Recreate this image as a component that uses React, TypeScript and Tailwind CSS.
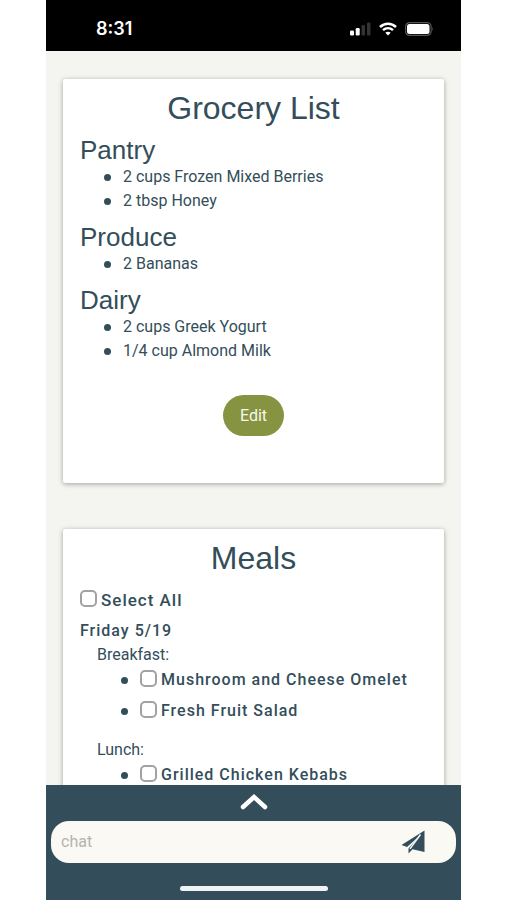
import React, { useState } from "react";

const groceries = [
  { name: "Pantry", items: ["2 cups Frozen Mixed Berries", "2 tbsp Honey"] },
  { name: "Produce", items: ["2 Bananas"] },
  { name: "Dairy", items: ["2 cups Greek Yogurt", "1/4 cup Almond Milk"] },
];

const meals = [
  { name: "Breakfast:", items: ["Mushroom and Cheese Omelet", "Fresh Fruit Salad"] },
  { name: "Lunch:", items: ["Grilled Chicken Kebabs"] },
];

const everyMeal = meals.flatMap((meal) => meal.items);

function StatusBar() {
  return (
    <header className="flex h-[51px] shrink-0 items-center justify-between bg-black pt-[6px] pr-[27px] pl-[50px] text-white">
      <span className="font-['Inter',sans-serif] text-[18px] leading-6 font-semibold">8:31</span>
      <div className="flex items-center gap-2">
        <svg width="21" height="14" viewBox="0 0 21 14" aria-label="Signal">
          <rect x="0" y="8.500" width="4" height="5" rx="1.200" fill="#fff" />
          <rect x="5.700" y="6" width="4" height="7.500" rx="1.200" fill="#fff" />
          <rect x="11.500" y="3" width="3.500" height="10.500" rx="1.200" fill="#333" />
          <rect x="17" y="0.500" width="3.500" height="13" rx="1.200" fill="#333" />
        </svg>
        <svg width="18" height="14" viewBox="0 0 18 14" fill="none" stroke="#fff" aria-label="Wi-Fi">
          <path d="M1 5C5.600 0.600 12.400 0.600 17 5" strokeWidth="2.500" />
          <path d="M4 8.200C6.900 5.500 11.100 5.500 14 8.200" strokeWidth="2.400" />
          <path d="M9 13.500L6.300 10.800C7.800 9.400 10.200 9.400 11.700 10.800Z" fill="#fff" stroke="none" />
        </svg>
        <svg width="29" height="14" viewBox="0 0 29 14" aria-label="Battery">
          <rect x="0.600" y="0.600" width="25.500" height="12.800" rx="4" fill="none" stroke="#555" strokeWidth="1.200" />
          <rect x="2" y="2" width="22.500" height="10" rx="2.500" fill="#fff" />
          <path d="M27.300 5Q28.800 7 27.300 9Z" fill="#666" />
        </svg>
      </div>
    </header>
  );
}

function Card({ title, children }: { title: string; children: React.ReactNode }) {
  return (
    <section className="rounded-[2px] bg-white px-[17px] pt-[9px] pb-[47px] shadow-[0_1px_5px_rgba(0,0,0,0.35)]">
      <h1 className="text-center font-['Liberation_Sans',sans-serif] text-[32px] leading-10">{title}</h1>
      {children}
    </section>
  );
}

function Bullet() {
  return <span className="mr-[12px] size-[7px] shrink-0 rounded-full bg-[#334e5a]" />;
}

function Check({ label, checked, onChange }: { label: string; checked: boolean; onChange: () => void }) {
  return (
    <label className="flex items-center gap-1 font-medium tracking-[1px]">
      <input
        type="checkbox"
        checked={checked}
        onChange={onChange}
        className="mb-1 size-[17px] appearance-none rounded-[5px] border-2 border-[#a3a1a1] bg-white checked:bg-[#334e5a]"
      />
      {label}
    </label>
  );
}

export default function App() {
  const [picked, setPicked] = useState<string[]>([]);
  const allPicked = picked.length === everyMeal.length;
  const toggle = (name: string) =>
    setPicked(picked.includes(name) ? picked.filter((item) => item !== name) : [...picked, name]);

  return (
    <div className="h-screen bg-white px-[46px] font-['Roboto',sans-serif] text-[16px] leading-6 text-[#334e5a]">
      <div className="flex h-full flex-col">
        <StatusBar />
        <main className="flex min-h-0 flex-1 flex-col gap-[46px] overflow-hidden bg-[#f4f4f1] px-[17px] pt-[28px]">
          <Card title="Grocery List">
            <div className="mt-2 flex flex-col gap-[10px]">
              {groceries.map((group) => (
                <div key={group.name}>
                  <h2 className="font-['Liberation_Sans',sans-serif] text-[26px] leading-7">{group.name}</h2>
                  <ul className="mt-px pl-[24px]">
                    {group.items.map((item) => (
                      <li key={item} className="flex items-center">
                        <Bullet />
                        {item}
                      </li>
                    ))}
                  </ul>
                </div>
              ))}
            </div>
            <div className="mt-8 flex justify-center">
              <button type="button" className="h-[41px] rounded-full bg-[#869442] px-[17px] text-[#f8f7ed]">
                Edit
              </button>
            </div>
          </Card>
          <Card title="Meals">
            <div className="mt-[10px] text-[17px]">
              <Check
                label="Select All"
                checked={allPicked}
                onChange={() => setPicked(allPicked ? [] : everyMeal)}
              />
            </div>
            <h2 className="mt-[7px] font-medium tracking-[1px]">Friday 5/19</h2>
            <div className="flex flex-col gap-[15px] pl-[17px]">
              {meals.map((meal) => (
                <div key={meal.name}>
                  <h3>{meal.name}</h3>
                  <ul className="mt-px flex flex-col gap-[7px]">
                    {meal.items.map((item) => (
                      <li key={item} className="flex items-center pl-[24px]">
                        <Bullet />
                        <Check label={item} checked={picked.includes(item)} onChange={() => toggle(item)} />
                      </li>
                    ))}
                  </ul>
                </div>
              ))}
            </div>
          </Card>
        </main>
        <footer className="flex shrink-0 flex-col items-center bg-[#334e5a] px-[5px] pt-[8px] pb-[9px]">
          <button type="button" aria-label="Expand chat" className="mb-[10px]">
            <svg width="28" height="18" viewBox="0 0 28 18" fill="none" stroke="#fff" strokeWidth="4.500">
              <path d="M3 14L14 4L25 14" strokeLinecap="round" />
            </svg>
          </button>
          <form
            className="flex h-[42px] w-full items-center rounded-[18px] bg-[#faf9f4] pr-[31px] pl-[10px]"
            onSubmit={(event) => event.preventDefault()}
          >
            <input
              type="text"
              aria-label="chat"
              placeholder="chat"
              className="min-w-0 flex-1 bg-transparent outline-none placeholder:text-[#b4b4b0]"
            />
            <button type="submit" aria-label="Send">
              <svg width="24" height="24" viewBox="0 0 24 24" fill="#334e5a">
                <path d="M23.500 0.500L0.500 15L6 17L20 4.500L7.500 18.500V23.500L11.500 19.300L23.500 22Z" />
                <path d="M19.500 4.500L9 18.800" stroke="#faf9f4" strokeWidth="1.400" />
              </svg>
            </button>
          </form>
          <div className="mt-[23px] h-[5px] w-[148px] rounded-full bg-[#f1f2f4]" />
        </footer>
      </div>
    </div>
  );
}
